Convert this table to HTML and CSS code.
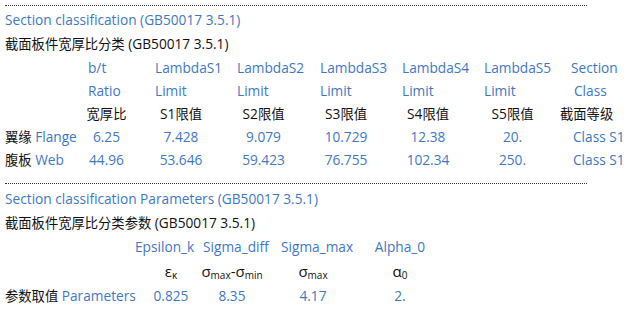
FILE: index.html
```html
<!DOCTYPE html>
<html>
<head>
<meta charset="utf-8">
<link rel="stylesheet" href="styles.css">
</head>
<body>
<section class="block first">
  <div class="rule"></div>
  <div class="title blue t1">Section classification (GB50017 3.5.1)</div>
  <div class="title t2"><span class="zh">截面板件宽厚比分类</span> (GB50017 3.5.1)</div>
  <div class="grid g1">
    <div></div><div class="h blue">b/t</div><div class="h blue">LambdaS1</div><div class="h blue">LambdaS2</div><div class="h blue">LambdaS3</div><div class="h blue">LambdaS4</div><div class="h blue">LambdaS5</div><div class="h blue">Section</div>
    <div></div><div class="h blue">Ratio</div><div class="h blue">Limit</div><div class="h blue">Limit</div><div class="h blue">Limit</div><div class="h blue">Limit</div><div class="h blue">Limit</div><div class="h blue cls">Class</div>
    <div></div><div class="c"><span class="zh">宽厚比</span></div><div class="c"><span>S1<span class="zh">限值</span></span></div><div class="c"><span>S2<span class="zh">限值</span></span></div><div class="c"><span>S3<span class="zh">限值</span></span></div><div class="c"><span>S4<span class="zh">限值</span></span></div><div class="c"><span>S5<span class="zh">限值</span></span></div><div class="c lv"><span class="zh">截面等级</span></div>
    <div class="lab"><span class="zh">翼缘</span> <span class="blue">Flange</span></div><div class="c blue">6.25</div><div class="c blue">7.428</div><div class="c blue">9.079</div><div class="c blue">10.729</div><div class="c blue">12.38</div><div class="c blue">20.</div><div class="c blue rc">Class S1</div>
    <div class="lab"><span class="zh">腹板</span> <span class="blue">Web</span></div><div class="c blue">44.96</div><div class="c blue">53.646</div><div class="c blue">59.423</div><div class="c blue">76.755</div><div class="c blue">102.34</div><div class="c blue">250.</div><div class="c blue rc">Class S1</div>
  </div>
</section>
<section class="block second">
  <div class="rule"></div>
  <div class="title blue t1">Section classification Parameters (GB50017 3.5.1)</div>
  <div class="title t2"><span class="zh">截面板件宽厚比分类参数</span> (GB50017 3.5.1)</div>
  <div class="grid g2">
    <div></div><div class="h blue">Epsilon_k</div><div class="h blue sd">Sigma_diff</div><div class="h blue sm">Sigma_max</div><div class="c blue">Alpha_0</div>
    <div></div><div class="c sym"><span>ε<sub>κ</sub></span></div><div class="c sym"><span>σ<sub>max</sub>-σ<sub>min</sub></span></div><div class="c sym"><span>σ<sub>max</sub></span></div><div class="c sym"><span>α<sub>0</sub></span></div>
    <div class="lab"><span class="zh">参数取值</span> <span class="blue">Parameters</span></div><div class="c blue">0.825</div><div class="c blue">8.35</div><div class="c blue">4.17</div><div class="c blue">2.</div>
  </div>
</section>
</body>
</html>
```
FILE: styles.css
```css
html, body {
  margin: 0;
  padding: 0;
  background: #ffffff;
}
body {
  font-family: "Open Sans", "Noto Sans CJK SC", sans-serif;
  font-size: 13.7px;
  color: #111111;
  width: 628px;
  height: 315px;
  overflow: hidden;
}
.zh {
  font-family: "Noto Sans CJK SC", sans-serif;
  font-size: 13.3px;
}
.block {
  padding: 0 5px;
}
.rule {
  width: 582px;
  height: 0;
  border-top: 1px dotted #333333;
}
.first .rule {
  margin-top: 5px;
}
.second .rule {
  margin-top: 12px;
}
.blue {
  color: #3f78c2;
}
.title {
  height: 24px;
  line-height: 24px;
  white-space: nowrap;
}
.t1 {
  margin-top: 2px;
}
.second .t1 {
  margin-top: 3px;
}
.grid {
  display: grid;
  white-space: nowrap;
}
.g1 {
  grid-template-columns: 53px 37px 52px 53px 52px 52px 57px 44px;
  grid-auto-rows: 23px;
  column-gap: 30px;
  align-items: center;
}
.g2 {
  grid-template-columns: 130px 72px 50px 112px 62px;
  grid-template-rows: 23px 25px 24px;
  align-items: center;
}
.h {
  text-align: left;
}
.sd {
  margin-left: -4px;
}
.sm {
  padding-left: 24px;
}
.c {
  display: flex;
  justify-content: center;
}
.cls {
  padding-left: 3px;
}
.lv {
  justify-content: flex-start;
  margin-left: -11px;
}
.rc {
  justify-content: flex-start;
  padding-left: 2px;
}
.lab {
  text-align: left;
}
.sym {
  font-size: 15px;
}
.sym sub {
  font-size: 10px;
  vertical-align: baseline;
  position: relative;
  top: 2px;
}
```
